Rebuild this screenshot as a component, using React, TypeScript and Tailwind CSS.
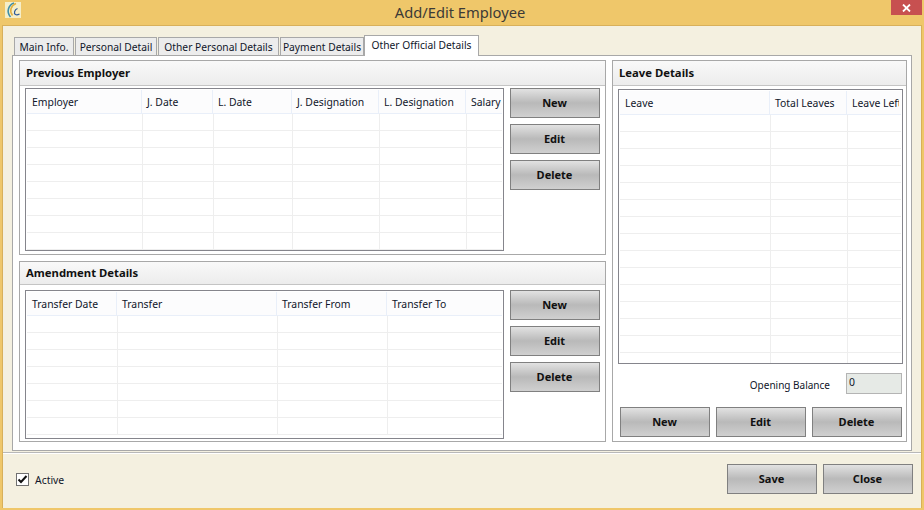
const uiFont = "font-['Noto_Sans','Open_Sans',sans-serif]";

function GridButton({ label }: { label: string }) {
    return (
        <button
            type="button"
            className="h-[30px] w-[90px] shrink-0 border border-[#808080] bg-gradient-to-b from-[#e2e2e2] via-[#b9b9b9] to-[#d0d0d0] pr-px text-[11px] font-bold text-[#111]"
        >
            {label}
        </button>
    );
}

type Column = { title: string; width: string };

function DataGrid({ columns, rows, className }: { columns: Column[]; rows: number; className: string }) {
    return (
        <div className={`overflow-hidden border border-[#85858c] bg-white p-px ${className}`}>
            <div className="flex h-[24px] border-b border-[#e9eff9] bg-[#fcfcfd]">
                {columns.map((col) => (
                    <div key={col.title} className={`flex shrink-0 items-center overflow-hidden whitespace-nowrap border-r border-[#e9eff9] pl-[5px] pt-[2px] text-[10.4px] text-[#10162a] last:border-r-0 ${col.width}`}>
                        {col.title}
                    </div>
                ))}
            </div>
            {Array.from({ length: rows }).map((_, i) => (
                <div key={i} className="flex h-[17px] border-b border-[#eeeeee] pl-px">
                    {columns.map((col) => (
                        <div key={col.title} className={`shrink-0 border-r border-[#eeeeee] last:border-r-0 ${col.width}`} />
                    ))}
                </div>
            ))}
        </div>
    );
}

function PanelHeader({ title, height }: { title: string; height: string }) {
    return (
        <div className={`flex shrink-0 items-center border-b border-[#c4c4c4] bg-gradient-to-b from-[#f9f9f9] to-[#ececec] pl-[6px] pt-[1px] text-[11.3px] font-bold text-[#111] ${height}`}>
            {title}
        </div>
    );
}

const employerColumns: Column[] = [
    { title: 'Employer', width: 'w-[115px]' },
    { title: 'J. Date', width: 'w-[71px]' },
    { title: 'L. Date', width: 'w-[79px]' },
    { title: 'J. Designation', width: 'w-[87px]' },
    { title: 'L. Designation', width: 'w-[87px]' },
    { title: 'Salary', width: 'w-[37px]' },
];

const amendmentColumns: Column[] = [
    { title: 'Transfer Date', width: 'w-[90px]' },
    { title: 'Transfer', width: 'w-[160px]' },
    { title: 'Transfer From', width: 'w-[110px]' },
    { title: 'Transfer To', width: 'w-[116px]' },
];

const leaveColumns: Column[] = [
    { title: 'Leave', width: 'w-[150px]' },
    { title: 'Total Leaves', width: 'w-[77px]' },
    { title: 'Leave Left', width: 'w-[52px]' },
];

const tabs = [
    { title: 'Main Info.', width: 'w-[60px]' },
    { title: 'Personal Detail', width: 'w-[82px]' },
    { title: 'Other Personal Details', width: 'w-[121px]' },
    { title: 'Payment Details', width: 'w-[84px]' },
];

export default function App() {
    return (
        <div className={`flex h-[510px] w-[924px] flex-col overflow-hidden bg-[#efc76a] ${uiFont}`}>
            {/* title bar */}
            <div className="relative flex h-[25px] shrink-0 items-center justify-center pr-[4px] text-[14.7px] text-[#3c3a36]">
                <svg className="absolute left-[5px] top-[2px]" width="16" height="16" viewBox="0 0 16 16" fill="none">
                    <rect width="16" height="16" fill="#f5eec8" />
                    <path d="M9 1C3.5 3 1 9.5 5.5 15" stroke="#3f8fa8" strokeWidth="1.6" />
                    <path d="M11 1.5C6 3.5 4 9 7.5 13.5" stroke="#e3b03f" strokeWidth="1.5" />
                    <path d="M12.5 6.5C9.5 7.5 8.5 11.5 10.5 12.5C11.5 13 13 12.8 14.5 12" stroke="#2f5a9a" strokeWidth="1.2" />
                </svg>
                Add/Edit Employee
                <div className="absolute right-[2px] top-0 flex h-[15px] w-[31px] items-center justify-center bg-[#c75050]">
                    <svg width="9" height="8" viewBox="0 0 9 8" fill="none">
                        <path d="M1 0.5L8 7.5M8 0.5L1 7.5" stroke="#fff" strokeWidth="1.8" />
                    </svg>
                </div>
            </div>

            {/* window body */}
            <div className="mx-[2px] mb-[2px] flex min-h-0 flex-1 flex-col border-x border-t border-[#d8b05a] bg-[#f4f0e0] pt-[9px]">
                <div className="mx-[9px] flex h-[20px] shrink-0 items-end pl-[2px]">
                    {tabs.map((tab) => (
                        <div key={tab.title} className={`mr-px flex h-[18px] shrink-0 items-center justify-center whitespace-nowrap border border-b-0 border-[#a8a8a8] bg-[#ececec] pt-[3px] text-[10.25px] text-[#10162a] ${tab.width}`}>
                            {tab.title}
                        </div>
                    ))}
                    <div className="relative z-10 -mb-px -ml-px flex h-[21px] w-[115px] shrink-0 items-center justify-center whitespace-nowrap border border-b-0 border-[#a8a8a8] bg-white text-[10.25px] text-[#10162a]">
                        Other Official Details
                    </div>
                </div>

                {/* tab page */}
                <div className="mx-[9px] flex h-[396px] shrink-0 gap-[6px] border border-[#a8a8a8] bg-white pl-[6px] pr-[5px] pt-[4px]">
                    <div className="flex w-[587px] shrink-0 flex-col gap-[6px]">
                        <section className="flex h-[195px] shrink-0 flex-col border border-[#a8a8a8]">
                            <PanelHeader title="Previous Employer" height="h-[25px]" />
                            <div className="flex gap-[6px] pl-[5px] pt-[2px]">
                                <DataGrid columns={employerColumns} rows={8} className="h-[163px] w-[479px] shrink-0" />
                                <div className="flex flex-col gap-[6px]">
                                    <GridButton label="New" />
                                    <GridButton label="Edit" />
                                    <GridButton label="Delete" />
                                </div>
                            </div>
                        </section>
                        <section className="flex h-[181px] shrink-0 flex-col border border-[#a8a8a8]">
                            <PanelHeader title="Amendment Details" height="h-[23px]" />
                            <div className="flex gap-[6px] pl-[5px] pt-[5px]">
                                <DataGrid columns={amendmentColumns} rows={7} className="h-[149px] w-[479px] shrink-0" />
                                <div className="flex flex-col gap-[6px]">
                                    <GridButton label="New" />
                                    <GridButton label="Edit" />
                                    <GridButton label="Delete" />
                                </div>
                            </div>
                        </section>
                    </div>

                    <section className="flex h-[382px] w-[295px] shrink-0 flex-col border border-[#a8a8a8]">
                        <PanelHeader title="Leave Details" height="h-[25px]" />
                        <div className="pl-[5px] pt-[3px]">
                            <DataGrid columns={leaveColumns} rows={15} className="h-[275px] w-[285px]" />
                        </div>
                        <div className="mt-[9px] flex items-center justify-end pr-[4px]">
                            <span className="mr-[16px] pt-[4px] text-[10px] text-[#10162a]">Opening Balance</span>
                            <div className="flex h-[21px] w-[56px] items-start border border-[#b4b4b4] bg-[#e6eae6] pl-[2px] text-[10.4px] leading-[17px] text-[#10162a]">0</div>
                        </div>
                        <div className="mt-[13px] flex gap-[6px] pl-[7px]">
                            <GridButton label="New" />
                            <GridButton label="Edit" />
                            <GridButton label="Delete" />
                        </div>
                    </section>
                </div>

                {/* footer */}
                <div className="mt-px flex flex-1 items-start justify-between border-t border-[#b8b8b8] pl-[13px] pr-[8px] pt-[11px] shadow-[inset_0_1px_0_#ffffff]">
                    <label className="mt-[9px] flex h-[13px] items-center gap-[6px] text-[10.4px] text-[#10162a]">
                        <span className="flex h-[13px] w-[13px] items-center justify-center border border-[#707070] bg-white">
                            <svg width="11" height="9" viewBox="0 0 11 9" fill="none">
                                <path d="M1.5 4.5L4 7L9.5 1" stroke="#111" strokeWidth="2" />
                            </svg>
                        </span>
                        <span className="pt-[2px]">Active</span>
                    </label>
                    <div className="flex gap-[6px]">
                        <GridButton label="Save" />
                        <GridButton label="Close" />
                    </div>
                </div>
            </div>
        </div>
    );
}
